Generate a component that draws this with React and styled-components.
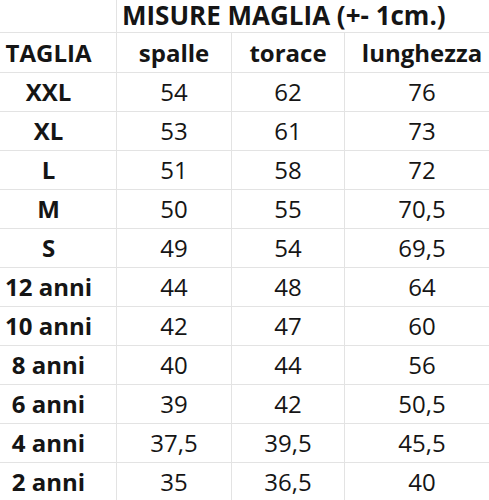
import React from 'react'
import styled, { createGlobalStyle } from 'styled-components'

const GlobalStyle = createGlobalStyle`
  html, body {
    margin: 0;
    padding: 0;
    background: #ffffff;
  }
  body {
    font-family: "Open Sans", "Noto Sans", sans-serif;
    color: #151515;
  }
`

const rows = [
  ['XXL', '54', '62', '76'],
  ['XL', '53', '61', '73'],
  ['L', '51', '58', '72'],
  ['M', '50', '55', '70,5'],
  ['S', '49', '54', '69,5'],
  ['12 anni', '44', '48', '64'],
  ['10 anni', '42', '47', '60'],
  ['8 anni', '40', '44', '56'],
  ['6 anni', '39', '42', '50,5'],
  ['4 anni', '37,5', '39,5', '45,5'],
  ['2 anni', '35', '36,5', '40'],
]

const Sheet = styled.div`
  width: 489px;
  height: 500px;
  overflow: hidden;
  display: grid;
  grid-template-columns: 117px 115px 113px 1fr;
  grid-auto-rows: 39px;
  grid-template-rows: 33px 40px;
`

const Cell = styled.div`
  box-sizing: border-box;
  display: flex;
  align-items: center;
  justify-content: center;
  border-bottom: 1px solid #e3e3e3;
  border-right: ${p => (p.$last ? 'none' : '1px solid #e3e3e3')};
  font-size: 24px;
  line-height: 1;
  font-weight: ${p => (p.$bold ? 700 : 400)};
  white-space: nowrap;
  padding-right: ${p => (p.$first ? '19px' : '0')};
  padding-left: ${p => (p.$last ? '10px' : '0')};
`

const Title = styled.div`
  box-sizing: border-box;
  grid-column: 2 / span 3;
  display: flex;
  align-items: center;
  padding: 0 0 3px 5px;
  border-bottom: 1px solid #e3e3e3;
  font-size: 26px;
  line-height: 1;
  font-weight: 700;
  white-space: nowrap;
`

const App = () => (
  <>
    <GlobalStyle />
    <Sheet>
      <Cell $first />
      <Title>MISURE MAGLIA (+- 1cm.)</Title>

      <Cell $first $bold>TAGLIA</Cell>
      <Cell $bold>spalle</Cell>
      <Cell $bold>torace</Cell>
      <Cell $bold $last>lunghezza</Cell>

      {rows.map(r => (
        <React.Fragment key={r[0]}>
          <Cell $first $bold>{r[0]}</Cell>
          <Cell>{r[1]}</Cell>
          <Cell>{r[2]}</Cell>
          <Cell $last>{r[3]}</Cell>
        </React.Fragment>
      ))}
    </Sheet>
  </>
)

export default App
